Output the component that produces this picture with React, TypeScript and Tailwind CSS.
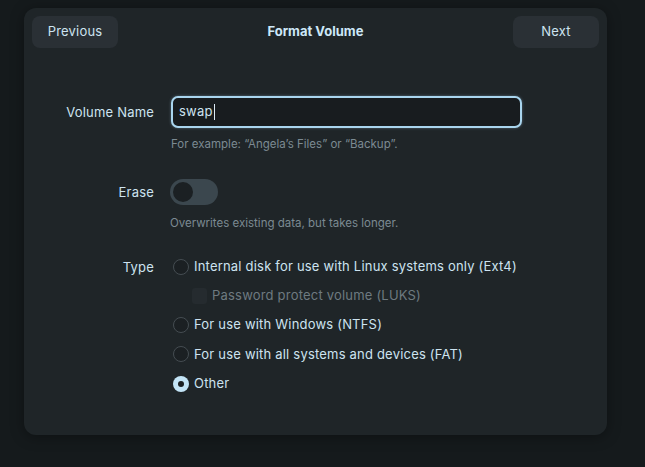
import { useState } from "react";

const options = [
  { id: "ext4", label: "Internal disk for use with Linux systems only (Ext4)" },
  { id: "ntfs", label: "For use with Windows (NTFS)" },
  { id: "fat", label: "For use with all systems and devices (FAT)" },
  { id: "other", label: "Other" },
];

const Radio = ({ checked }: { checked: boolean }) =>
  checked ? (
    <span className="flex h-[16px] w-[16px] items-center justify-center rounded-full bg-[#c3e5f7]">
      <span className="h-[6px] w-[6px] rounded-full bg-[#1b2023]" />
    </span>
  ) : (
    <span className="h-[16px] w-[16px] rounded-full border border-[#454d52] bg-[#1b2023]" />
  );

const App = () => {
  const [type, setType] = useState("other");

  return (
    <div className="h-[467px] w-[645px] bg-[#151a1c] pt-[8px] pl-[24px] font-['Inter',sans-serif] text-[13px] text-[#cde3f0]">
      <div className="h-[427px] w-[583px] rounded-[12px] bg-[#1f2528] p-[8px] shadow-[0_2px_14px_rgba(0,0,0,0.35)]">
        <div className="flex items-center justify-between">
          <button className="h-[32px] w-[86px] rounded-[8px] bg-[#2a3035] text-[13px] tracking-[0.2px] text-[#cde3f0]">
            Previous
          </button>
          <div className="font-bold text-[#cde8f8]">Format Volume</div>
          <button className="h-[32px] w-[86px] rounded-[8px] bg-[#2a3035] text-[13px] tracking-[0.2px] text-[#cde3f0]">
            Next
          </button>
        </div>

        <div className="mt-[48px] flex tracking-[0.2px]">
          <div className="w-[122px] text-right leading-[32px]">Volume Name</div>
          <div className="ml-[17px] flex flex-col">
            <div className="flex h-[32px] w-[351px] items-center rounded-[7px] border-2 border-[#a9d5ee] bg-[#181c1f] px-[6px] shadow-[0_0_3px_rgba(169,213,238,0.4)]">
              <span>swap</span>
              <span className="ml-[1px] h-[16px] w-[1px] bg-[#dce9f2]" />
            </div>
            <div className="mt-[8px] text-[11.5px] tracking-normal text-[#7c8a92]">
              For example: “Angela’s Files” or “Backup”.
            </div>
          </div>
        </div>

        <div className="mt-[26px] flex tracking-[0.2px]">
          <div className="w-[122px] text-right leading-[26px]">Erase</div>
          <div className="ml-[16px] flex flex-col">
            <div className="flex h-[26px] w-[48px] items-center rounded-full bg-[#3b474e] px-[3px]">
              <span className="h-[20px] w-[20px] rounded-full bg-[#1b2023]" />
            </div>
            <div className="mt-[10px] text-[11.5px] tracking-normal text-[#7c8a92]">
              Overwrites existing data, but takes longer.
            </div>
          </div>
        </div>

        <div className="mt-[24px] flex tracking-[0.2px]">
          <div className="w-[122px] text-right leading-[20px]">Type</div>
          <div className="ml-[19px] flex flex-col gap-[9.3px]">
            {options.map((o) => (
              <div key={o.id} className="flex flex-col gap-[9.3px]">
                <button
                  onClick={() => setType(o.id)}
                  className="flex h-[20px] items-center gap-[5px] text-left tracking-[0.2px] text-[#cde3f0]"
                >
                  <Radio checked={type === o.id} />
                  <span>{o.label}</span>
                </button>
                {o.id === "ext4" && (
                  <div className="ml-[19px] flex h-[20px] items-center gap-[5px] text-[#6e7a80]">
                    <span className="h-[16px] w-[15px] rounded-[3px] bg-[#252b2f]" />
                    <span>Password protect volume (LUKS)</span>
                  </div>
                )}
              </div>
            ))}
          </div>
        </div>
      </div>
    </div>
  );
};

export default App;
